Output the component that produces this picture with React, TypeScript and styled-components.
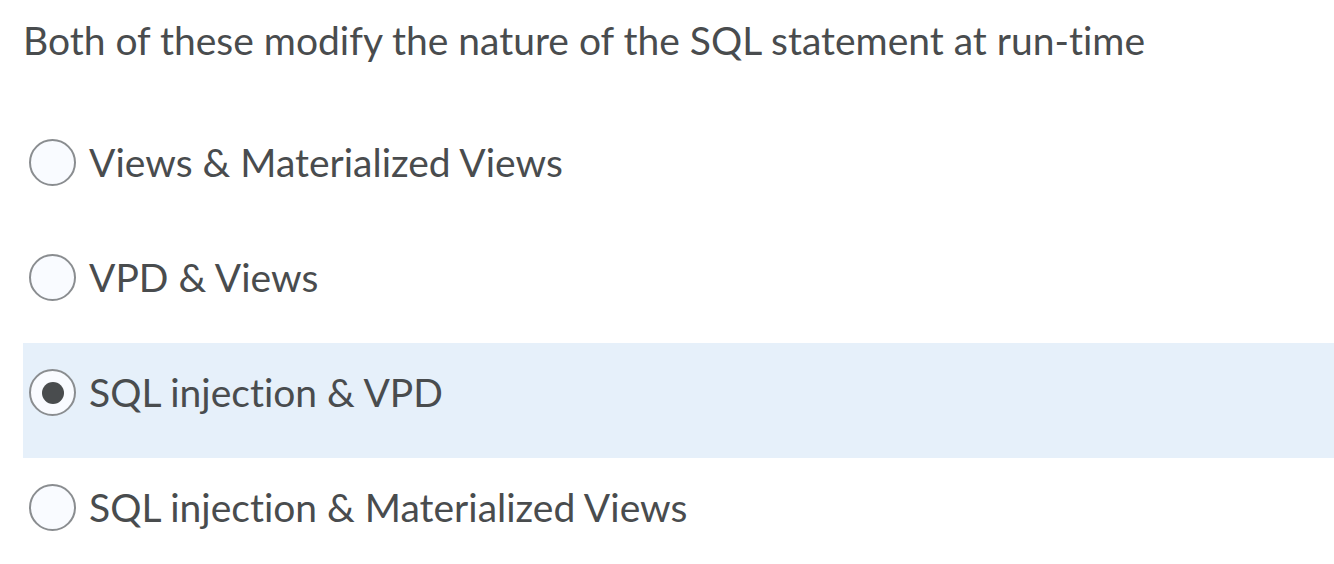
import { useState } from 'react';
import styled, { createGlobalStyle } from 'styled-components';

const GlobalStyle = createGlobalStyle`
  body {
    margin: 0;
    background: #ffffff;
    font-family: Lato, "Liberation Sans", sans-serif;
    font-variant-ligatures: none;
    color: #494c4e;
  }
`;

const Page = styled.div`
  padding: 0 0 0 23px;
`;

const Question = styled.h1`
  margin: 0;
  padding-top: 17px;
  height: 113px;
  box-sizing: border-box;
  font-size: 39px;
  font-weight: 400;
  line-height: 46px;
  color: #494c4e;
`;

const Options = styled.div`
  display: flex;
  flex-direction: column;
`;

const Option = styled.label<{ $selected: boolean }>`
  display: flex;
  align-items: flex-start;
  gap: 13px;
  height: 115px;
  box-sizing: border-box;
  padding: 26px 0 0 6px;
  background: ${(p) => (p.$selected ? '#e6f0fa' : 'transparent')};
  cursor: pointer;
`;

const Radio = styled.span<{ $checked: boolean }>`
  flex: none;
  width: 47px;
  height: 47px;
  box-sizing: border-box;
  border-radius: 50%;
  border: 2px solid #8a8d90;
  background: #f9fbff;
  display: flex;
  align-items: center;
  justify-content: center;

  &::after {
    content: '';
    display: ${(p) => (p.$checked ? 'block' : 'none')};
    width: 22px;
    height: 22px;
    border-radius: 50%;
    background: #494c4e;
  }
`;

const OptionText = styled.span`
  font-size: 39px;
  line-height: 47px;
  color: #494c4e;
`;

const answers = [
  'Views & Materialized Views',
  'VPD & Views',
  'SQL injection & VPD',
  'SQL injection & Materialized Views',
];

export default function App() {
  const [selected, setSelected] = useState(2);

  return (
    <Page>
      <GlobalStyle />
      <Question>Both of these modify the nature of the SQL statement at run-time</Question>
      <Options>
        {answers.map((answer, i) => (
          <Option key={answer} $selected={i === selected} onClick={() => setSelected(i)}>
            <Radio $checked={i === selected} />
            <OptionText>{answer}</OptionText>
          </Option>
        ))}
      </Options>
    </Page>
  );
}
